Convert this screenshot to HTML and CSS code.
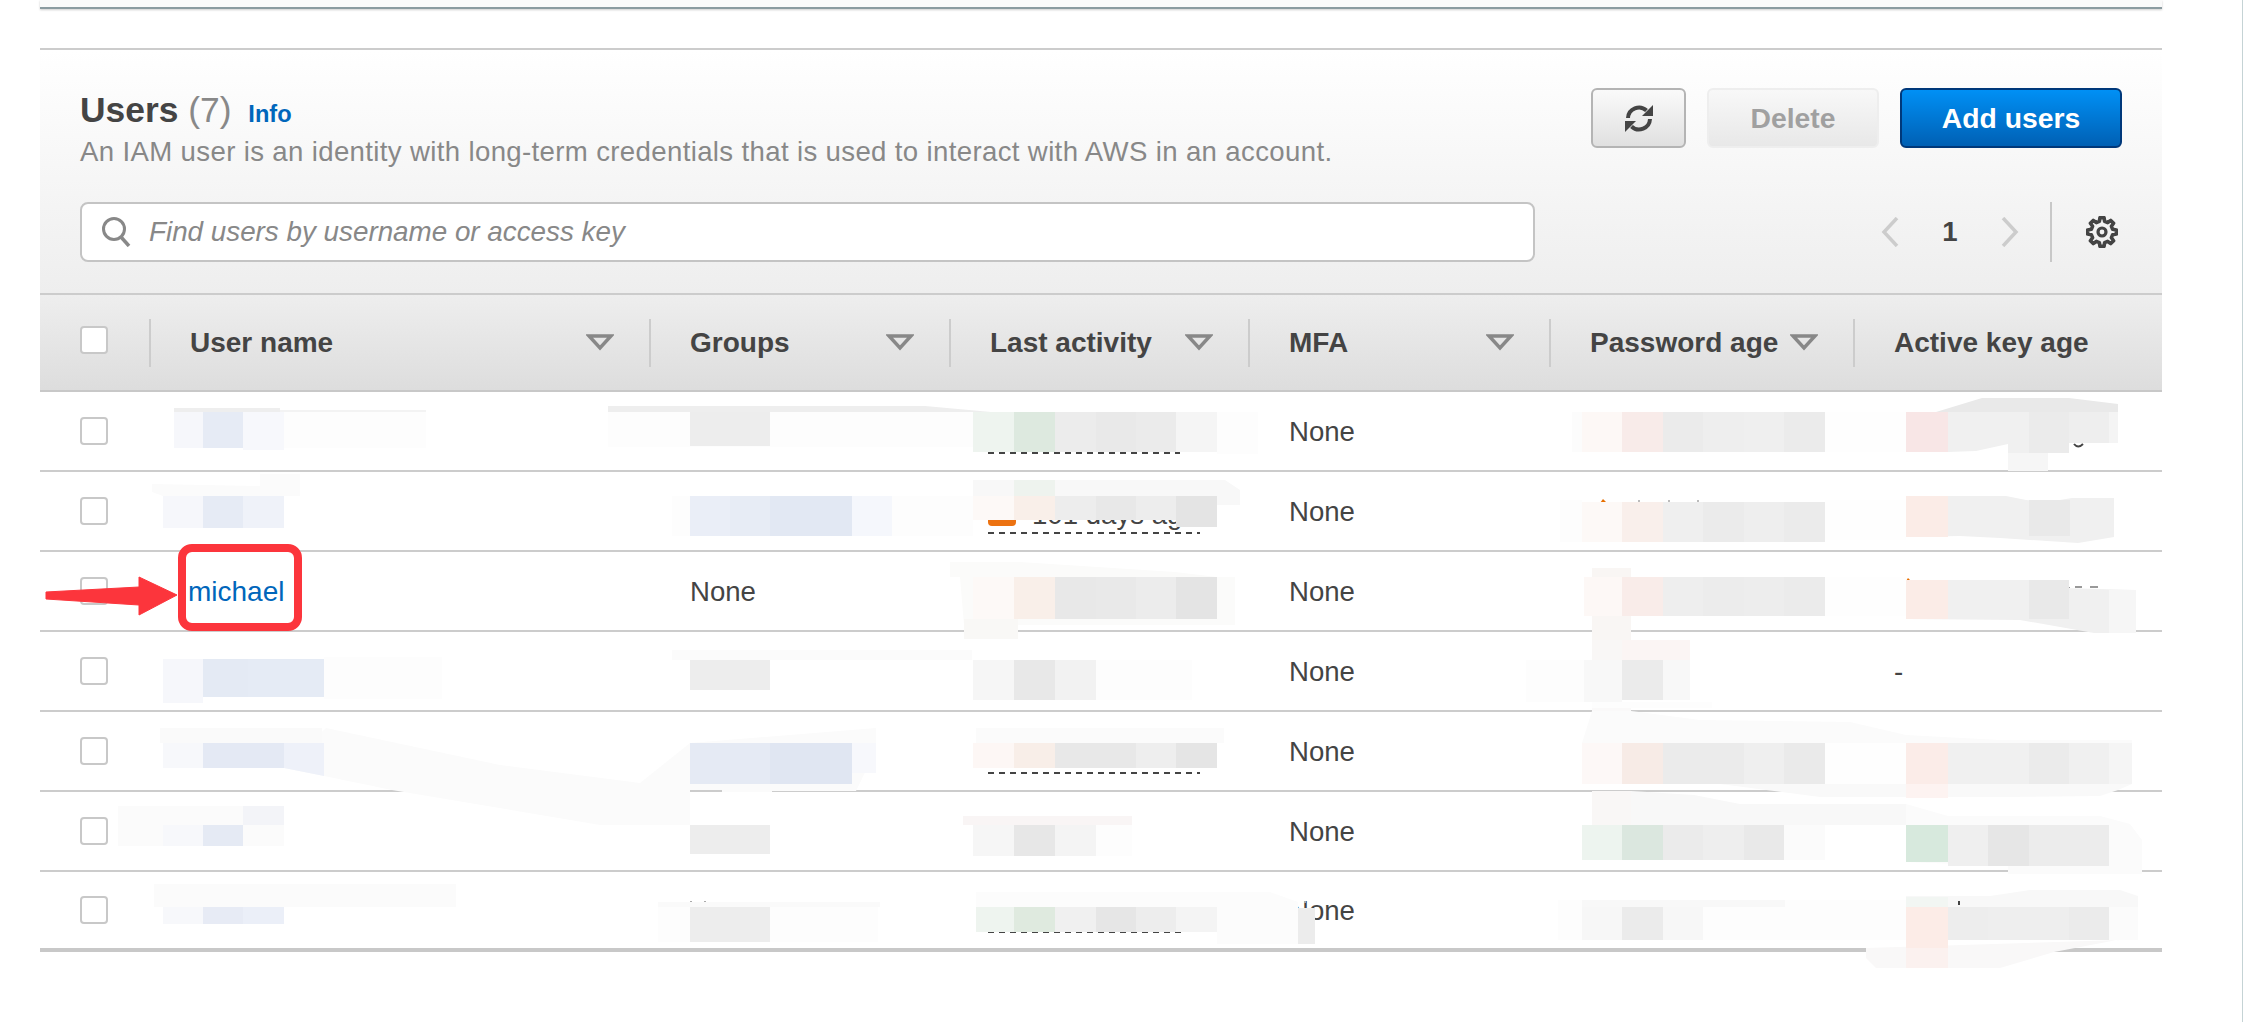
FILE: index.html
```html
<!DOCTYPE html>
<html lang="en">
<head>
  <meta charset="UTF-8" />
  <title>Users</title>
  <link rel="stylesheet" href="styles.css">
</head>
<body>
  <div class="top-panel"></div>
  <div class="side-line"></div>

  <section class="users-card">
    <div class="card-head">
      <div class="title-row">
        <div>
          <h2 class="title">Users <span class="count">(7)</span> <a class="info">Info</a></h2>
          <p class="desc">An IAM user is an identity with long-term credentials that is used to interact with AWS in an account.</p>
        </div>
        <div class="actions">
          <button class="btn btn-refresh">
            <svg width="28" height="29" viewBox="0 0 28 29">
              <path d="M3 14 A11 11 0 0 1 21.5 6.5" fill="none" stroke="#444" stroke-width="4" />
              <path d="M28 1 V12 H17 Z" fill="#444" />
              <path d="M25 15 A11 11 0 0 1 6.5 22.5" fill="none" stroke="#444" stroke-width="4" />
              <path d="M0 28 V17 H11 Z" fill="#444" />
            </svg>
          </button>
          <button class="btn btn-delete">Delete</button>
          <button class="btn btn-add">Add users</button>
        </div>
      </div>
      <div class="filter-row">
        <div class="search">
          <svg width="29" height="30" viewBox="0 0 29 30">
            <circle cx="12" cy="12" r="10.5" fill="none" stroke="#888" stroke-width="3" />
            <path d="M19 20 L27 29" fill="none" stroke="#888" stroke-width="3.5" />
          </svg>
          <span class="placeholder">Find users by username or access key</span>
        </div>
        <div class="pager">
          <svg class="chevron" width="18" height="30" viewBox="0 0 18 30">
            <path d="M16 1 L3 15 L16 29" fill="none" stroke="#ccc" stroke-width="3.5" />
          </svg>
          <span class="page-num">1</span>
          <svg class="chevron" width="18" height="30" viewBox="0 0 18 30">
            <path d="M2 1 L15 15 L2 29" fill="none" stroke="#ccc" stroke-width="3.5" />
          </svg>
          <div class="pager-sep"></div>
          <svg width="32" height="32" viewBox="0 0 32 32">
            <polygon points="13.34,5.33 13.98,1.64 18.02,1.64 18.66,5.33 21.67,6.57 24.73,4.42 27.58,7.27 25.43,10.33 26.67,13.34 30.36,13.98 30.36,18.02 26.67,18.66 25.43,21.67 27.58,24.73 24.73,27.58 21.67,25.43 18.66,26.67 18.02,30.36 13.98,30.36 13.34,26.67 10.33,25.43 7.27,27.58 4.42,24.73 6.57,21.67 5.33,18.66 1.64,18.02 1.64,13.98 5.33,13.34 6.57,10.33 4.42,7.27 7.27,4.42 10.33,6.57" fill="none" stroke="#444" stroke-width="3.6" stroke-linejoin="round" />
            <circle cx="16" cy="16" r="4" fill="none" stroke="#444" stroke-width="3.2" />
          </svg>
        </div>
      </div>
    </div>

    <table class="users-table">
      <colgroup>
        <col class="col-check"><col class="col-name"><col class="col-groups"><col class="col-activity"><col class="col-mfa"><col class="col-pass"><col class="col-key">
      </colgroup>
      <thead>
        <tr>
          <th><span class="check check-head"></span></th>
          <th><div class="th-inner">User name <svg class="caret" width="28" height="17" viewBox="0 0 28 17"><path d="M3 2 H25 L14 14 Z" fill="none" stroke="#888" stroke-width="3.5" /></svg></div></th>
          <th><div class="th-inner">Groups <svg class="caret" width="28" height="17" viewBox="0 0 28 17"><path d="M3 2 H25 L14 14 Z" fill="none" stroke="#888" stroke-width="3.5" /></svg></div></th>
          <th><div class="th-inner">Last activity <svg class="caret" width="28" height="17" viewBox="0 0 28 17"><path d="M3 2 H25 L14 14 Z" fill="none" stroke="#888" stroke-width="3.5" /></svg></div></th>
          <th><div class="th-inner">MFA <svg class="caret" width="28" height="17" viewBox="0 0 28 17"><path d="M3 2 H25 L14 14 Z" fill="none" stroke="#888" stroke-width="3.5" /></svg></div></th>
          <th><div class="th-inner">Password age <svg class="caret" width="28" height="17" viewBox="0 0 28 17"><path d="M3 2 H25 L14 14 Z" fill="none" stroke="#888" stroke-width="3.5" /></svg></div></th>
          <th><div class="th-inner">Active key age</div></th>
        </tr>
      </thead>
      <tbody>
        <tr>
          <td><span class="check"></span></td><td></td><td></td>
          <td><span class="activity" style="width:192px"></span></td>
          <td>None</td><td></td><td></td>
        </tr>
        <tr>
          <td><span class="check"></span></td><td></td><td></td>
          <td><span class="activity" style="width:212px"><i class="warn"></i>101 days ago</span></td>
          <td>None</td><td></td><td></td>
        </tr>
        <tr>
          <td><span class="check"></span></td>
          <td><a class="user-link">michael</a></td>
          <td>None</td><td></td>
          <td>None</td><td></td><td></td>
        </tr>
        <tr>
          <td><span class="check"></span></td><td></td><td></td><td></td>
          <td>None</td><td></td><td>-</td>
        </tr>
        <tr>
          <td><span class="check"></span></td><td></td><td></td>
          <td><span class="activity" style="width:212px"></span></td>
          <td>None</td><td></td><td></td>
        </tr>
        <tr>
          <td><span class="check"></span></td><td></td><td></td><td></td>
          <td>None</td><td></td><td></td>
        </tr>
        <tr>
          <td><span class="check"></span></td><td></td><td></td>
          <td><span class="activity" style="width:197px"></span></td>
          <td>None</td><td></td><td></td>
        </tr>
      </tbody>
    </table>
  </section>

  <!-- mosaic redactions and the red annotation, drawn over the table -->
  <svg class="overlay" width="2268" height="1022" viewBox="0 0 2268 1022">
    <!-- row 1 -->
    <rect x="174" y="408" width="106" height="5" fill="#eee" /><rect x="280" y="410" width="146" height="3" fill="#f3f3f3" />
    <rect x="284" y="412" width="142" height="36" fill="#fdfdfd" />
    <rect x="174" y="412" width="29" height="36" fill="#f6f7fb" /><rect x="203" y="412" width="40" height="36" fill="#e6ebf5" /><rect x="243" y="412" width="41" height="38" fill="#f7f8fc" />
    <polygon points="608,406 925,406 991,412 608,412" fill="#eee" /><rect x="608" y="412" width="365" height="35" fill="#fdfdfd" />
    <rect x="690" y="412" width="80" height="34" fill="#ededed" />
    <rect x="973" y="412" width="41" height="40" fill="#eef4ef" /><rect x="1014" y="412" width="41" height="40" fill="#dde9df" /><rect x="1055" y="412" width="41" height="40" fill="#ececec" /><rect x="1096" y="412" width="40" height="40" fill="#e9e9e9" /><rect x="1136" y="412" width="40" height="40" fill="#ebebeb" /><rect x="1176" y="412" width="41" height="40" fill="#f5f5f5" /><rect x="1217" y="412" width="41" height="42" fill="#fdfdfd" />
    <rect x="1572" y="412" width="10" height="40" fill="#fcfcfc" /><rect x="1582" y="412" width="40" height="40" fill="#fdf8f6" /><rect x="1622" y="412" width="41" height="40" fill="#f8ebe9" /><rect x="1663" y="412" width="40" height="40" fill="#ebebeb" /><rect x="1703" y="412" width="41" height="40" fill="#eee" /><rect x="1744" y="412" width="40" height="40" fill="#efefef" /><rect x="1784" y="412" width="41" height="40" fill="#ebebeb" /><rect x="1825" y="412" width="81" height="40" fill="#fefefe" />
    <polygon points="1936,412 1982,398 2069,398 2118,404 2118,412" fill="#e9e9e9" />
    <rect x="1906" y="412" width="42" height="40" fill="#f8e6e6" /><polygon points="1948,412 2118,412 2118,443 2048,443 2048,453 2008,453 2008,444 1976,451 1948,452" fill="#f0f0f0" />
    <rect x="2029" y="412" width="40" height="41" fill="#ebebeb" /><rect x="2069" y="412" width="40" height="31" fill="#eee" /><rect x="2109" y="412" width="9" height="31" fill="#f4f4f4" />
    <rect x="2008" y="453" width="40" height="18" fill="#f6f6f6" />
    <path d="M2074 444 Q2078 449 2083 444" fill="none" stroke="#444" stroke-width="2" />
    <!-- row 2 -->
    <polygon points="152,484 260,486 260,474 300,474 300,496 284,496 284,528 163,528 163,496 152,492" fill="#fbfbfb" />
    <rect x="163" y="496" width="40" height="32" fill="#f6f7fb" /><rect x="203" y="496" width="40" height="32" fill="#e6ebf5" /><rect x="243" y="496" width="41" height="32" fill="#eff2f9" />
    <rect x="672" y="496" width="301" height="40" fill="#fdfdfd" />
    <rect x="690" y="496" width="40" height="40" fill="#eaeef7" /><rect x="730" y="496" width="40" height="40" fill="#e7ecf5" /><rect x="770" y="496" width="82" height="40" fill="#e2e8f3" /><rect x="852" y="496" width="40" height="40" fill="#f5f7fc" />
    <polygon points="973,480 1225,480 1240,490 1240,505 1217,505 1217,496 973,496" fill="#f8f8f8" /><rect x="1014" y="480" width="41" height="16" fill="#eef3ee" />
    <polygon points="973,496 1217,496 1217,527 1198,527 1190,520 973,520" fill="#ededed" />
    <rect x="973" y="496" width="41" height="24" fill="#fdf9f7" /><rect x="1014" y="496" width="41" height="24" fill="#f9efe9" /><rect x="1096" y="496" width="40" height="24" fill="#e8e8e8" /><rect x="1176" y="496" width="41" height="31" fill="#e4e4e4" />
    <rect x="1560" y="500" width="22" height="42" fill="#fdfdfd" />
    <polygon points="1603,499 1600,503 1607,503" fill="#e76f00" />
    <rect x="1638" y="500" width="2" height="3" fill="#bbb" /><rect x="1668" y="500" width="2" height="3" fill="#bbb" /><rect x="1697" y="500" width="2" height="3" fill="#bbb" />
    <rect x="1582" y="502" width="40" height="40" fill="#fdf9f7" /><rect x="1622" y="502" width="41" height="40" fill="#f9efeb" /><rect x="1663" y="502" width="40" height="40" fill="#efefef" /><rect x="1703" y="502" width="41" height="40" fill="#ebebeb" /><rect x="1744" y="502" width="40" height="40" fill="#eee" /><rect x="1784" y="502" width="41" height="40" fill="#ebebeb" /><rect x="1825" y="500" width="81" height="40" fill="#fefefe" />
    <polygon points="1906,496 2006,496 2026,500 2048,502 2072,498 2114,498 2114,537 2078,543 2000,538 1960,536 1906,537" fill="#f0f0f0" />
    <rect x="1906" y="496" width="42" height="41" fill="#fbece7" /><rect x="2029" y="500" width="41" height="36" fill="#e9e9e9" />
    <!-- row 3 -->
    <polygon points="950,562 1020,562 1175,572 1217,577 1235,577 1235,625 1018,625 964,625 960,577 950,577" fill="#fbfbfa" />
    <rect x="973" y="577" width="41" height="42" fill="#fdf9f7" /><rect x="1014" y="577" width="41" height="42" fill="#f9efe9" /><rect x="1055" y="577" width="41" height="42" fill="#e8e8e8" /><rect x="1096" y="577" width="40" height="42" fill="#e9e9e9" /><rect x="1136" y="577" width="40" height="42" fill="#ececec" /><rect x="1176" y="577" width="41" height="42" fill="#e4e4e4" />
    <rect x="964" y="619" width="54" height="20" fill="#f9f8f6" />
    <rect x="1592" y="568" width="39" height="72" fill="#f9f6f4" />
    <rect x="1584" y="577" width="38" height="39" fill="#fdf8f6" /><rect x="1622" y="577" width="41" height="39" fill="#f9ece9" /><rect x="1663" y="577" width="40" height="39" fill="#eee" /><rect x="1703" y="577" width="41" height="39" fill="#ececec" /><rect x="1744" y="577" width="40" height="39" fill="#ededed" /><rect x="1784" y="577" width="41" height="39" fill="#ebebeb" /><rect x="1825" y="577" width="81" height="39" fill="#fefefe" />
    <polygon points="1908,578 1906,581 1911,581" fill="#e76f00" />
    <rect x="2066" y="587" width="4" height="1" fill="#999" /><rect x="2075" y="586" width="7" height="2" fill="#999" /><rect x="2090" y="586" width="8" height="2" fill="#999" />
    <polygon points="1906,580 2038,580 2062,588 2136,590 2136,633 2094,633 2020,620 1906,619" fill="#f0f0f0" />
    <rect x="1906" y="580" width="42" height="39" fill="#fbece7" /><rect x="2029" y="580" width="40" height="39" fill="#e9e9e9" /><rect x="2109" y="590" width="27" height="43" fill="#f6f6f6" />
    <!-- row 4 -->
    <rect x="324" y="657" width="118" height="42" fill="#fdfdfd" />
    <rect x="163" y="659" width="40" height="44" fill="#f6f7fb" /><rect x="203" y="659" width="45" height="38" fill="#e4eaf4" /><rect x="248" y="659" width="76" height="38" fill="#e5ebf5" />
    <rect x="672" y="650" width="300" height="10" fill="#fbfbfb" />
    <rect x="690" y="660" width="80" height="30" fill="#ededed" />
    <rect x="973" y="660" width="41" height="40" fill="#f6f6f6" /><rect x="1014" y="660" width="41" height="40" fill="#e8e8e8" /><rect x="1055" y="660" width="41" height="40" fill="#f2f2f2" /><rect x="1096" y="660" width="96" height="40" fill="#fdfdfd" />
    <rect x="1526" y="660" width="58" height="42" fill="#fdfdfd" />
    <rect x="1592" y="640" width="30" height="20" fill="#f9f7f6" /><rect x="1622" y="640" width="68" height="20" fill="#fbf5f4" />
    <rect x="1584" y="660" width="38" height="42" fill="#f8f8f8" /><rect x="1622" y="660" width="41" height="40" fill="#ebebeb" /><rect x="1663" y="660" width="27" height="40" fill="#f8f8f8" />
    <rect x="1592" y="702" width="39" height="10" fill="#faf9f9" /><rect x="1592" y="702" width="120" height="6" fill="#fdfdfd" />
    <!-- row 5, with the long sweep across the row line -->
    <polygon points="284,768 324,776 392,790 600,825 690,825 690,790 722,790 722,792 772,792 772,791 856,791 876,750 876,728 690,743 640,783 500,765 326,728" fill="#fbfbfb" />
    <rect x="160" y="728" width="162" height="15" fill="#fafafa" />
    <rect x="163" y="743" width="40" height="25" fill="#f7f8fb" /><rect x="203" y="743" width="81" height="25" fill="#e4e9f4" /><polygon points="284,743 324,743 324,776 284,768" fill="#eef1f9" />
    <rect x="690" y="743" width="162" height="41" fill="#e5eaf4" /><rect x="770" y="743" width="82" height="41" fill="#e0e6f2" /><rect x="852" y="743" width="24" height="30" fill="#f7f8fc" />
    <rect x="976" y="728" width="248" height="15" fill="#fbfbfb" />
    <rect x="973" y="743" width="41" height="25" fill="#fdf7f5" /><rect x="1014" y="743" width="41" height="25" fill="#f8eee8" /><rect x="1055" y="743" width="81" height="25" fill="#e8e8e8" /><rect x="1136" y="743" width="40" height="25" fill="#eee" /><rect x="1176" y="743" width="41" height="25" fill="#e5e5e5" />
    <polygon points="1592,711 1631,711 1700,720 1850,722 1906,735 2000,740 2132,740 2132,743 1582,743" fill="#fbfbfb" />
    <rect x="1582" y="743" width="40" height="41" fill="#fdf8f7" /><rect x="1622" y="743" width="41" height="41" fill="#f7ebe6" /><rect x="1663" y="743" width="81" height="41" fill="#ebebeb" /><rect x="1744" y="743" width="40" height="41" fill="#efefef" /><rect x="1784" y="743" width="41" height="41" fill="#eaeaea" /><rect x="1825" y="743" width="81" height="41" fill="#fefefe" />
    <rect x="1906" y="743" width="42" height="41" fill="#fbece8" /><rect x="1948" y="743" width="81" height="41" fill="#f0f0f0" /><rect x="2029" y="743" width="40" height="41" fill="#ebebeb" /><rect x="2069" y="743" width="40" height="41" fill="#f0f0f0" /><rect x="2109" y="743" width="23" height="41" fill="#f5f5f5" />
    <polygon points="1592,784 1720,784 1820,797 1906,797 2000,797 2100,796 2118,790 2132,784" fill="#f9f9f9" /><rect x="1906" y="784" width="42" height="14" fill="#fdf3f1" />
    <!-- row 6 -->
    <rect x="118" y="806" width="166" height="40" fill="#fbfbfb" /><rect x="243" y="806" width="41" height="19" fill="#f3f4f8" />
    <rect x="163" y="825" width="40" height="21" fill="#f7f8fb" /><rect x="203" y="825" width="40" height="21" fill="#e5eaf4" />
    <rect x="690" y="825" width="80" height="29" fill="#ededed" />
    <polygon points="963,816 1132,816 1132,825 963,825" fill="#f9f5f5" />
    <rect x="973" y="825" width="41" height="31" fill="#f6f6f6" /><rect x="1014" y="825" width="41" height="31" fill="#e7e7e7" /><rect x="1055" y="825" width="41" height="31" fill="#f4f4f4" /><rect x="1096" y="825" width="36" height="31" fill="#fdfdfd" />
    <rect x="1592" y="791" width="39" height="34" fill="#f9f7f6" /><polygon points="1631,791 1694,795 1740,804 1906,804 1906,825 1631,825" fill="#f8f8f8" />
    <polygon points="1906,804 1948,816 2100,816 2130,824 2142,840 2142,874 2008,874 2008,866 1906,862" fill="#fbfbfb" />
    <rect x="1582" y="825" width="40" height="35" fill="#edf4ef" /><rect x="1622" y="825" width="41" height="35" fill="#dbe7df" /><rect x="1663" y="825" width="40" height="35" fill="#ebebeb" /><rect x="1703" y="825" width="41" height="35" fill="#eee" /><rect x="1744" y="825" width="40" height="35" fill="#e9e9e9" /><rect x="1784" y="825" width="41" height="35" fill="#fbfbfb" />
    <rect x="1906" y="825" width="42" height="37" fill="#d7e9dd" /><rect x="1948" y="825" width="40" height="41" fill="#efefef" /><rect x="1988" y="825" width="41" height="41" fill="#e6e6e6" /><rect x="2029" y="825" width="80" height="41" fill="#ececec" />
    <!-- row 7 -->
    <rect x="154" y="884" width="302" height="23" fill="#fbfbfb" />
    <rect x="163" y="907" width="40" height="17" fill="#f7f8fb" /><rect x="203" y="907" width="40" height="17" fill="#e7ebf5" /><rect x="243" y="907" width="41" height="17" fill="#ebeff8" />
    <rect x="690" y="901" width="2" height="2" fill="#aaa" /><rect x="704" y="901" width="2" height="2" fill="#aaa" />
    <rect x="658" y="902" width="222" height="5" fill="#fafafa" /><rect x="658" y="907" width="220" height="35" fill="#fdfdfd" />
    <rect x="690" y="907" width="80" height="35" fill="#ededed" />
    <polygon points="976,892 1270,892 1298,902 1298,944 1217,944 1217,907 976,907" fill="#fcfcfc" />
    <rect x="976" y="907" width="38" height="25" fill="#eef4ef" /><rect x="1014" y="907" width="41" height="25" fill="#dfeadf" /><rect x="1055" y="907" width="41" height="25" fill="#f0f0f0" /><rect x="1096" y="907" width="40" height="25" fill="#e6e6e6" /><rect x="1136" y="907" width="40" height="25" fill="#ededed" /><rect x="1176" y="907" width="41" height="25" fill="#f4f4f4" />
    <rect x="1298" y="908" width="17" height="36" fill="#ececec" /><rect x="1304" y="901" width="2" height="2" fill="#aaa" />
    <rect x="1558" y="900" width="348" height="40" fill="#fdfdfd" /><rect x="1582" y="900" width="203" height="7" fill="#f8f8f8" />
    <rect x="1582" y="907" width="40" height="33" fill="#f7f7f7" /><rect x="1622" y="907" width="41" height="33" fill="#ebebeb" /><rect x="1663" y="907" width="40" height="33" fill="#f7f7f7" />
    <polygon points="1906,896 1990,896 2030,890 2120,890 2138,896 2138,907 1906,907" fill="#f8f8f8" /><rect x="1906" y="897" width="42" height="10" fill="#f2f6f3" />
    <rect x="1958" y="901" width="2" height="4" fill="#444" />
    <polygon points="1866,948 2120,940 2138,936 2054,952 2000,968 1876,968 1866,958" fill="#f9f8f8" />
    <rect x="1906" y="907" width="42" height="41" fill="#fcece7" /><rect x="1906" y="948" width="42" height="20" fill="#fbf1ef" /><rect x="1948" y="907" width="40" height="33" fill="#ededed" /><rect x="1988" y="907" width="81" height="33" fill="#eee" /><rect x="2069" y="907" width="40" height="33" fill="#ebebeb" /><rect x="2109" y="907" width="29" height="33" fill="#fbfbfb" />
    <!-- annotation -->
    <rect x="182" y="548" width="116" height="79" rx="10" fill="none" stroke="#fc353c" stroke-width="8" />
    <polygon points="46,592 139,587 139,577 177,595 139,615 139,605 46,599" fill="#fc353c" stroke="#fc353c" stroke-width="1" stroke-linejoin="round" />
  </svg>
</body>
</html>
```

FILE: styles.css
```css
body {
  position: relative;
  margin: 0;
  padding: 0;
  width: 2268px;
  height: 1022px;
  overflow: hidden;
  background-color: #fff;
  color: #444;
  font-family: "Liberation Sans", Arial, sans-serif;
  font-size: 27.6px;
}

.top-panel {
  height: 7px;
  margin: 0 106px 0 40px;
  background-color: #fafafa;
  border-bottom: 2px solid #8b9ba0;
  box-shadow: 0 1px 2px rgba(0, 0, 0, 0.2);
}

.side-line {
  position: absolute;
  top: 0;
  left: 2242px;
  width: 1px;
  height: 1022px;
  background-color: #c5d3d5;
}

.users-card {
  margin: 39px 106px 0 40px;
  border-top: 2px solid #ccc;
}

.card-head {
  height: 243px;
  box-sizing: border-box;
  padding: 38px 40px 0;
  background: linear-gradient(#fff, #eee);
}

.title-row {
  display: flex;
  justify-content: space-between;
  height: 114px;
}

.title {
  margin: 1px 0 0;
  font-size: 35.4px;
  line-height: 42px;
  font-weight: bold;
  color: #444;
}

.count {
  font-weight: normal;
  color: #888;
}

.info {
  margin-left: 7px;
  font-size: 23.6px;
  color: #0066bb;
}

.desc {
  margin: -1px 0 0;
  line-height: 36px;
  letter-spacing: 0.35px;
  color: #888;
}

.actions {
  display: flex;
  gap: 21px;
}

.btn {
  height: 60px;
  box-sizing: border-box;
  padding: 0;
  border-radius: 6px;
  font-family: inherit;
  font-size: 28.3px;
  font-weight: bold;
}

.btn-refresh {
  display: flex;
  align-items: center;
  justify-content: center;
  width: 95px;
  border: 2px solid #b4b4b4;
  background: linear-gradient(#fafafa, #e0e0e0);
}

.btn-delete {
  width: 172px;
  border: 2px solid #eee;
  background: linear-gradient(#f8f8f8, #e8e8e8);
  color: #a0a0a0;
}

.btn-add {
  width: 222px;
  border: 2px solid #00387a;
  background: linear-gradient(#0090f5, #0060b4);
  color: #fff;
}

.filter-row {
  display: flex;
  justify-content: space-between;
}

.search {
  display: flex;
  align-items: center;
  gap: 19px;
  width: 1455px;
  height: 60px;
  box-sizing: border-box;
  padding-left: 20px;
  background-color: #fff;
  border: 2px solid #c4c4c4;
  border-radius: 8px;
}

.placeholder {
  margin-left: -1px;
  font-size: 27.8px;
  font-style: italic;
  color: #888;
}

.pager {
  display: flex;
  align-items: center;
  height: 60px;
  padding-right: 4px;
}

.page-num {
  width: 102px;
  text-align: center;
  font-weight: bold;
}

.pager-sep {
  width: 2px;
  height: 60px;
  margin: 0 34px 0 31px;
  background-color: #c8c8c8;
}

.users-table {
  width: 2122px;
  table-layout: fixed;
  border-collapse: collapse;
}

.col-check { width: 109px; }
.col-name { width: 500px; }
.col-groups { width: 300px; }
.col-activity { width: 299px; }
.col-mfa { width: 301px; }
.col-pass { width: 304px; }

.users-table th {
  height: 95px;
  padding: 0;
  text-align: left;
  font-size: 28px;
  background: linear-gradient(#eee, #ddd);
  border-top: 2px solid #ccc;
  border-bottom: 2px solid #c8c8c8;
}

.th-inner {
  display: flex;
  align-items: center;
  justify-content: space-between;
  height: 48px;
  padding: 0 35px 0 39px;
  border-left: 2px solid #ccc;
}

.users-table td {
  height: 76px;
  padding: 2px 0 0 41px;
  border-bottom: 2px solid #ccc;
}

.users-table td:first-child,
.users-table th:first-child {
  padding: 0 0 0 40px;
}

.users-table tbody tr:last-child td {
  height: 74px;
  border-bottom: 4px solid #c8c8c8;
}

.check {
  display: block;
  width: 28px;
  height: 28px;
  box-sizing: border-box;
  background-color: #fff;
  border: 2px solid #c8c8c8;
  border-radius: 4px;
}

.check-head {
  margin-top: -6px;
}

.user-link {
  margin-left: -2px;
  font-size: 28px;
  color: #0066bb;
}

.activity {
  display: block;
  height: 44px;
  margin-left: -2px;
  line-height: 50px;
  white-space: nowrap;
  background: repeating-linear-gradient(90deg, #444 0 6px, transparent 6px 11px) left bottom / 100% 2px no-repeat;
}

.warn {
  display: inline-block;
  width: 28px;
  height: 28px;
  margin-right: 16px;
  vertical-align: -2px;
  background-color: #ec7211;
  border-radius: 4px;
}

.overlay {
  position: absolute;
  top: 0;
  left: 0;
}
```
